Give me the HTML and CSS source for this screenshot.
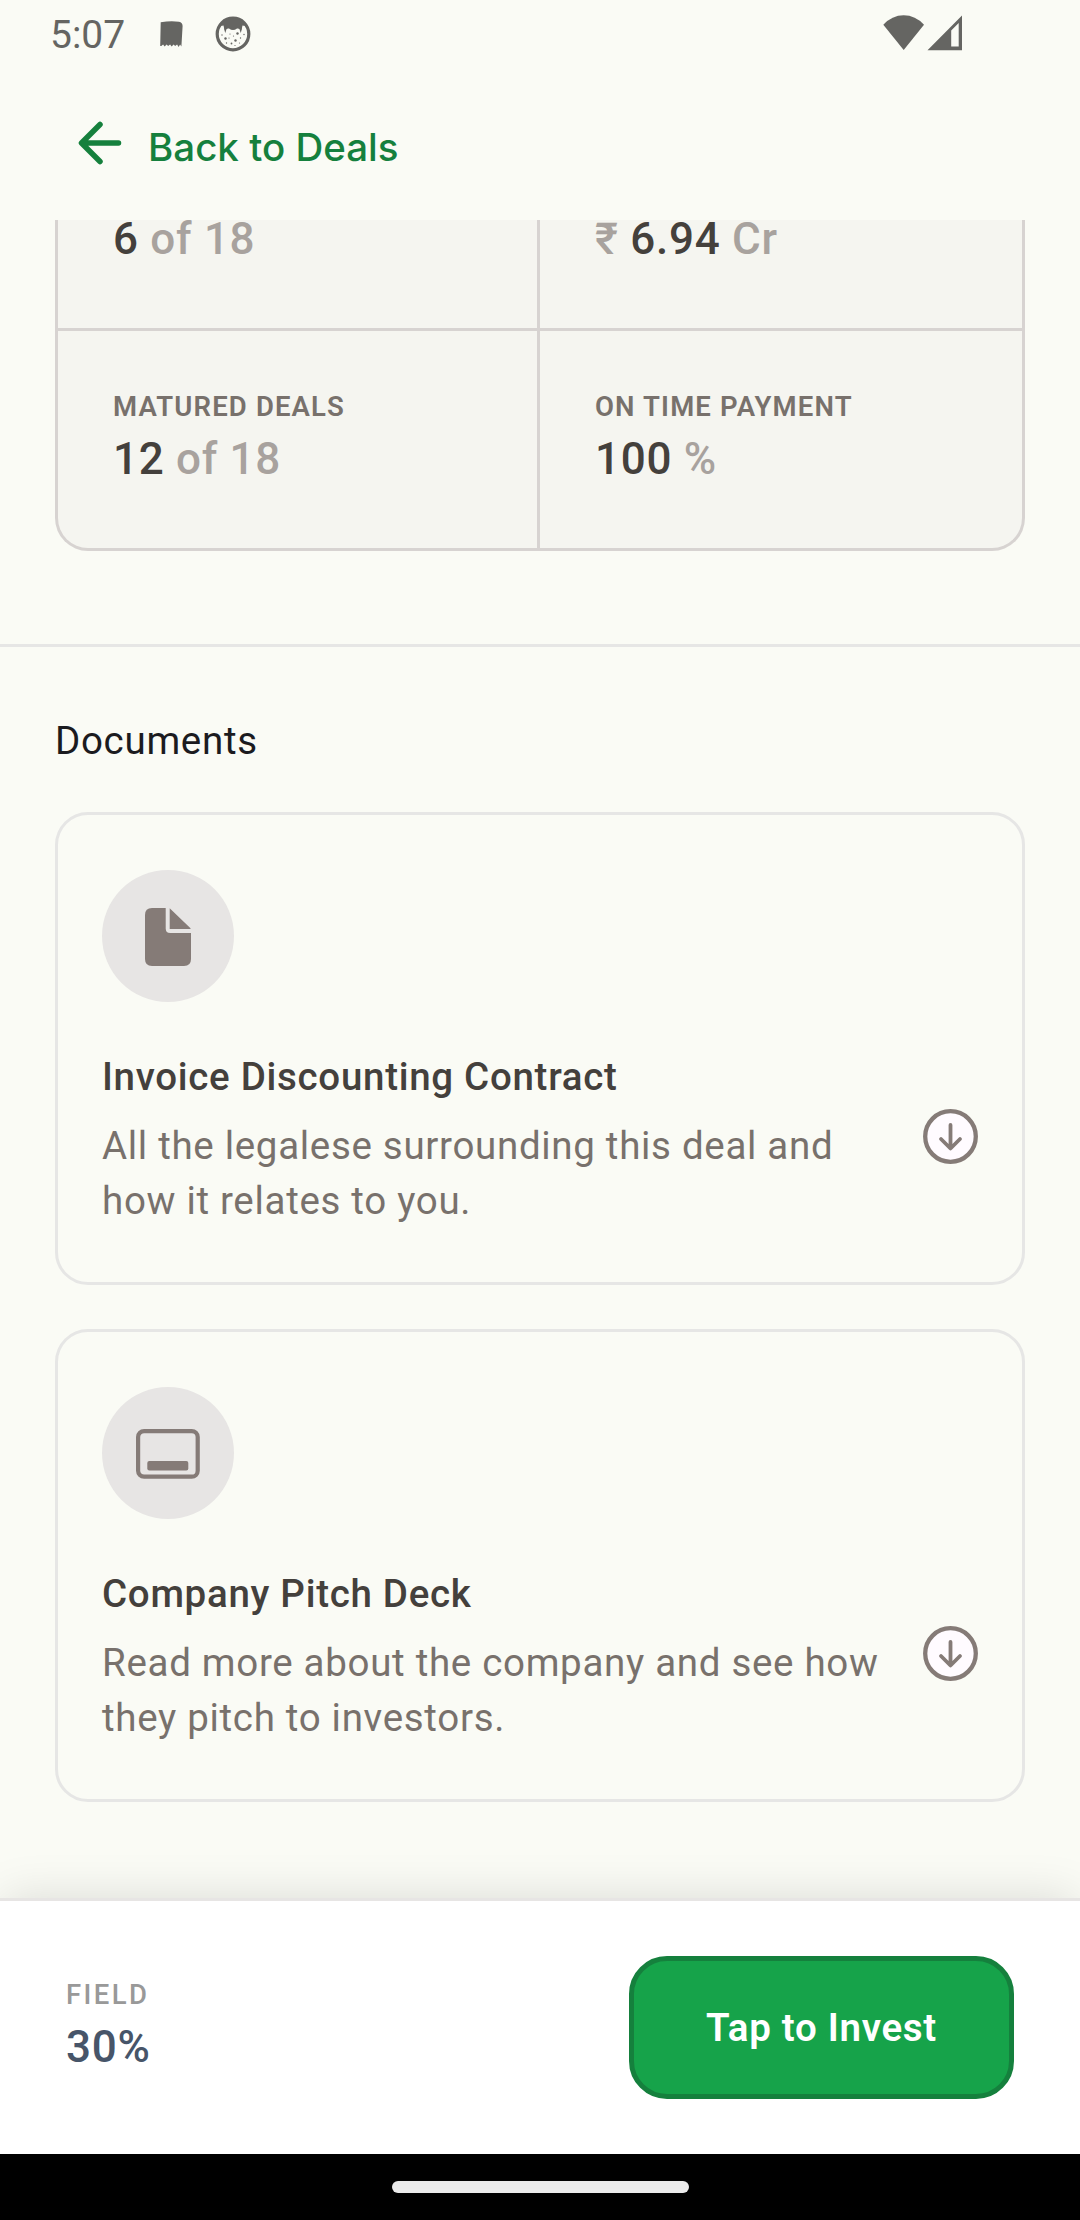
FILE: index.html
```html
<!DOCTYPE html>
<html lang="en">
<head>
<meta charset="utf-8">
<title>Deal details</title>
<link rel="stylesheet" href="styles.css">
</head>
<body>
<div class="status-bar">
  <span class="clock">5:07</span>
  <svg class="notif-note" width="23" height="26" viewBox="0 0 23 26"><path d="M.7 1.2Q11-.3 19 .8q3.6.7 3.6 4.2L21.4 25.500l-1.300-2-1.500 2.500-1.500-2.500-2 1.500-1.500-1.500-2 2-1.500-2-2 1.500-1.500-1.500-2 2-1.500-2-1.800 1.500L.2 25z"/></svg>
  <svg class="notif-face" width="36" height="36" viewBox="0 0 36 36">
    <circle cx="18" cy="18" r="15.800" fill="none" stroke="#656562" stroke-width="3.200"/>
    <path d="M6 10Q10 2 18 2t12 8l-2.500-.5-1 4.500q-2.500-2-4.500-1.500Q18 15.500 14 12.500q-2-.5-4.500 1.500l-1-4.500z"/>
    <path d="M9.200 9 12 11.500 10.300 17 9.500 14.500zM26.800 9 24 11.500 25.700 17 26.500 14.500z"/>
    <g><circle cx="22.500" cy="17.500" r="1.200"/><circle cx="10.500" cy="22.500" r="1.200"/><circle cx="20.500" cy="24.500" r="1.200"/><circle cx="15" cy="18" r=".6"/><circle cx="18.500" cy="20" r=".6"/><circle cx="14" cy="22" r=".6"/><circle cx="25.500" cy="22" r=".7"/><circle cx="16.500" cy="27.500" r=".9"/><circle cx="11.500" cy="27" r=".7"/><circle cx="7" cy="19" r=".7"/><circle cx="29" cy="18.500" r=".7"/><circle cx="24.500" cy="27" r=".6"/><circle cx="20" cy="29.500" r=".6"/></g>
  </svg>
  <svg class="signals" width="80" height="36" viewBox="0 0 80 36">
    <path d="M.3 9.700Q9 .2 20.700.2T41 9.700L20.700 35z"/>
    <path fill-rule="evenodd" d="M44.500 35.300 79 .5V35.300zM68.200 15.500V31.500h7.500V8z"/>
  </svg>
</div>
<header class="app-header">
  <svg width="44" height="44" viewBox="0 0 44 44" fill="none" stroke="#15803d" stroke-width="5.500" stroke-linecap="round" stroke-linejoin="round"><path d="M40.500 22H4M22 3.500 3.500 22 22 40.500"/></svg>
  <span class="back-label">Back to Deals</span>
</header>
<main class="scroller">
  <section class="stats">
    <div class="stat stat-top"><p class="value">6 <span>of 18</span></p></div>
    <div class="stat stat-top"><p class="value"><span>₹</span> 6.94 <span>Cr</span></p></div>
    <div class="stat"><p class="label">MATURED DEALS</p><p class="value">12 <span>of 18</span></p></div>
    <div class="stat"><p class="label">ON TIME PAYMENT</p><p class="value">100 <span>%</span></p></div>
  </section>
  <section class="documents">
    <h2>Documents</h2>
    <article class="doc">
      <div class="doc-icon">
        <svg width="46" height="58" viewBox="0 0 46 58" fill="#857b77"><path d="M7 0H20.700V20.500Q20.700 25 25.200 25H46V51Q46 58 39 58H7Q0 58 0 51V7Q0 0 7 0zM24.700.3 45.500 20.200V21H24.700z"/></svg>
      </div>
      <div class="doc-row">
        <div class="doc-text"><h3>Invoice Discounting Contract</h3><p>All the legalese surrounding this deal and<br>how it relates to you.</p></div>
        <svg class="download" width="55" height="55" viewBox="0 0 55 55"><circle cx="27.500" cy="27.500" r="25.300"/><path d="M27.500 16V39.300M18 30l9.500 9.500L37 30"/></svg>
      </div>
    </article>
    <article class="doc">
      <div class="doc-icon">
        <svg width="64" height="50" viewBox="0 0 64 50" fill="none" stroke="#857b77" stroke-width="4.200"><rect x="2.100" y="2.100" width="59.600" height="45.600" rx="6"/><rect x="11.300" y="32" width="41" height="9.500" rx="2" fill="#857b77" stroke="none"/></svg>
      </div>
      <div class="doc-row">
        <div class="doc-text"><h3>Company Pitch Deck</h3><p>Read more about the company and see how<br>they pitch to investors.</p></div>
        <svg class="download" width="55" height="55" viewBox="0 0 55 55"><circle cx="27.500" cy="27.500" r="25.300"/><path d="M27.500 16V39.300M18 30l9.500 9.500L37 30"/></svg>
      </div>
    </article>
  </section>
</main>
<footer class="invest-bar">
  <div><p class="field-label">FIELD</p><p class="field-value">30%</p></div>
  <button class="invest">Tap to Invest</button>
</footer>
<div class="nav-bar"><div class="pill"></div></div>
</body>
</html>
```
FILE: styles.css
```css
* { box-sizing: border-box; margin: 0; }
body {
  width: 1080px;
  height: 2220px;
  display: flex;
  flex-direction: column;
  overflow: hidden;
  background: #fafbf5;
  font-family: Roboto, "Noto Sans", sans-serif;
}
svg { display: block; flex: none; }

.status-bar { height: 66px; display: flex; align-items: center; padding-left: 50px; padding-right: 117px; fill: #656562; }
.clock { width: 110px; font-size: 39px; color: #656562; line-height: 46px; margin-top: 3px; }
.notif-note { margin-top: 2px; }
.notif-face { margin-left: 32px; margin-top: 1px; }
.signals { margin-left: auto; margin-top: -1px; }

.app-header { height: 154px; display: flex; align-items: center; padding: 0 0 0 78px; }
.back-label { margin: 7px 0 0 26px; font: 500 38.5px/48px Inter, sans-serif; color: #15803d; }

.scroller { flex: 1; min-height: 0; overflow: hidden; display: flex; flex-direction: column; justify-content: flex-end; }
.stats {
  flex: none;
  margin: 0 55px 93px;
  display: grid;
  grid-template-columns: 482px 1fr;
  grid-template-rows: 108px 220px;
  column-gap: 0;
  border: 3px solid #d7d3d1;
  border-top: 0;
  border-radius: 0 0 33px 33px;
  background: #f5f5f0;
}
.stat { display: flex; flex-direction: column; justify-content: flex-end; padding: 0 0 61px 55px; }
.stat:nth-child(odd) { border-right: 3px solid #d7d3d1; }
.stat:nth-child(n+3) { border-top: 3px solid #d7d3d1; }
.label { font-weight: 600; font-size: 27.5px; line-height: 40px; margin-bottom: 5px; letter-spacing: 1.15px; color: #78716c; }
.value { font-weight: 500; font-size: 44px; line-height: 55px; letter-spacing: .7px; color: #44403c; }
.value span { color: #a8a29e; }
.stat-top { padding-bottom: 70px; }
.stat-top .value { line-height: 38px; }

.documents { flex: none; border-top: 3px solid #e6e6e5; padding: 67px 55px 96px; }
h2 { font-weight: 400; font-size: 38.5px; line-height: 54px; letter-spacing: .7px; color: #1b1b1f; }
.doc { margin-top: 44px; height: 473px; padding: 55px 44px 54px; border: 3px solid #e6e6e5; border-radius: 33px; }
.doc-icon { width: 132px; height: 132px; margin-bottom: 44px; border-radius: 50%; background: #e7e5e4; display: flex; align-items: center; justify-content: center; padding-top: 2px; }
.doc-row { display: flex; align-items: center; justify-content: space-between; }
h3 { font-weight: 500; font-size: 38.5px; line-height: 62px; letter-spacing: .7px; color: #44403c; white-space: nowrap; }
.doc-text p { margin-top: 10px; font-size: 38.5px; line-height: 55px; letter-spacing: .69px; color: #78716c; white-space: nowrap; }
.download { margin-bottom: 2px; }
.download circle { fill: #fffbff; stroke: #857b77; stroke-width: 4.300; }
.download path { fill: none; stroke: #857b77; stroke-width: 3.800; stroke-linecap: round; stroke-linejoin: round; }

.invest-bar {
  position: relative;
  height: 256px;
  display: flex;
  align-items: center;
  justify-content: space-between;
  padding: 0 66px;
  background: #fff;
  border-top: 3px solid #e7e5e4;
  box-shadow: 0 -4px 44px -4px rgba(0, 0, 0, .13);
}
.field-label { font-weight: 500; font-size: 27.5px; line-height: 40px; letter-spacing: 2.4px; color: #999; }
.field-value { margin: 2px 0 4px; font-weight: 500; font-size: 44px; line-height: 60px; letter-spacing: .7px; color: #475569; }
.invest { width: 385px; height: 143px; border: 5.500px solid #15803d; border-radius: 38px; background: #16a34a; color: #fff; font: 600 38.5px/54px Roboto, sans-serif; letter-spacing: .7px; }

.nav-bar { height: 66px; background: #000; display: flex; align-items: center; justify-content: center; }
.pill { width: 297px; height: 12px; border-radius: 6px; background: #ebebeb; }
```
